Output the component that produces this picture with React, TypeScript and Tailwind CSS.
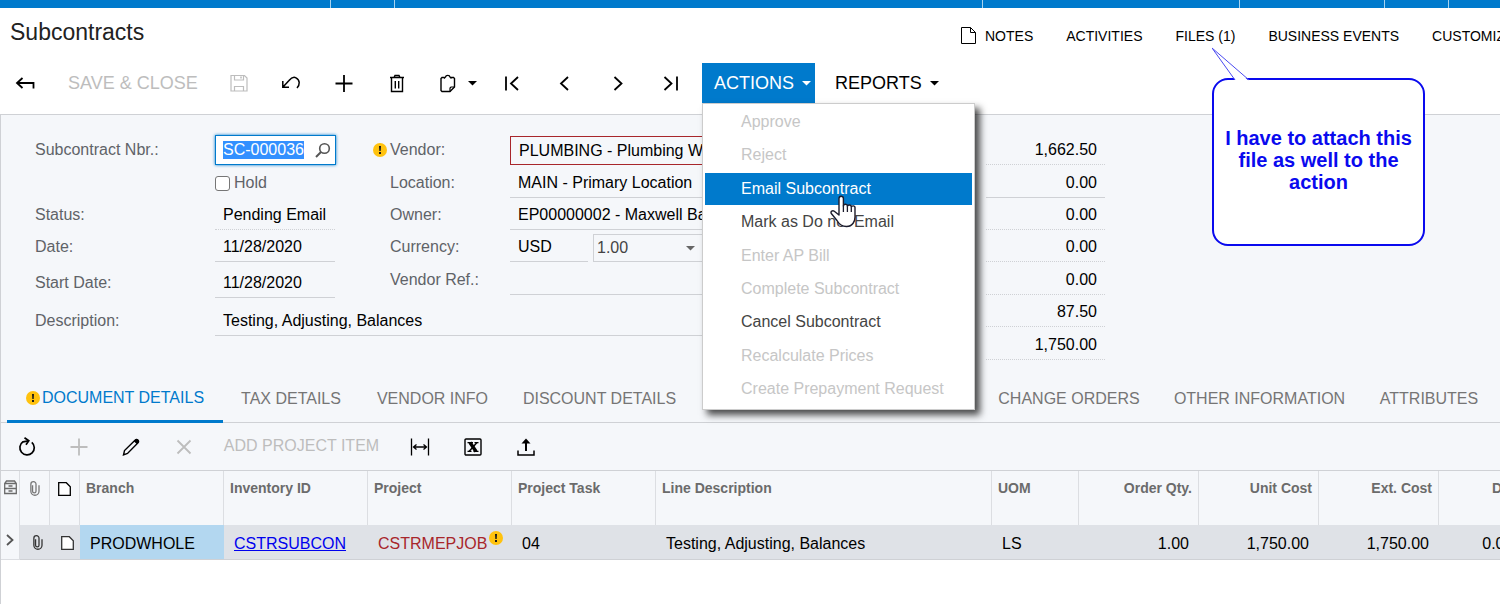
import React, { useEffect, useRef } from "react";

type IconProps = { children: React.ReactNode; size?: number; className?: string };

function Icon({ children, size = 20, className = "" }: IconProps) {
  return (
    <svg
      width={size}
      height={size}
      viewBox={`0 0 ${size} ${size}`}
      fill="none"
      stroke="currentColor"
      strokeWidth="1.6"
      className={`shrink-0 ${className}`}
      aria-hidden="true"
    >
      {children}
    </svg>
  );
}

function Caret({ className = "" }: { className?: string }) {
  return (
    <svg width="9" height="5" viewBox="0 0 9 5" className={`shrink-0 ${className}`} aria-hidden="true">
      <path d="M0 0h9L4.500 4.600z" fill="currentColor" />
    </svg>
  );
}

function Alert({ className = "" }: { className?: string }) {
  return (
    <svg width="14" height="14" viewBox="0 0 14 14" className={`shrink-0 ${className}`} role="img" aria-label="Warning">
      <circle cx="7" cy="7" r="7" fill="#ffc20e" />
      <path d="M6 3h2l-.3 5H6.300z" fill="#1a1a1a" />
      <rect x="6" y="9" width="2" height="2" fill="#1a1a1a" />
    </svg>
  );
}

function PageIcon({ className = "" }: { className?: string }) {
  return (
    <svg width="15" height="17" viewBox="0 0 15 17" fill="none" stroke="currentColor" className={`shrink-0 ${className}`} aria-hidden="true">
      <path d="M.5.5h9l5 5v11H.5z" />
      <path d="M9.500.5v5h5" />
    </svg>
  );
}

function DocIcon() {
  return (
    <svg width="13" height="14" viewBox="0 0 13 14" className="inline-block" aria-hidden="true">
      <path d="M.7.700h7.600l4 4v8.600H.7z" fill="#fff" stroke="currentColor" strokeWidth="1.300" />
    </svg>
  );
}

function ClipIcon({ className = "" }: { className?: string }) {
  return (
    <svg width="11" height="15" viewBox="0 0 10 14" fill="none" stroke="currentColor" strokeWidth="1.200" className={`inline-block ${className}`} aria-hidden="true">
      <path d="M3.200 4v5.500a1.600 1.600 0 0 0 3.200 0V3a2.400 2.400 0 0 0-4.800 0v6.500a3.800 3.800 0 0 0 7.600 0V4" />
    </svg>
  );
}

function ToolButton({
  label,
  disabled,
  children,
  className = "w-[53px]",
}: {
  label: string;
  disabled?: boolean;
  children: React.ReactNode;
  className?: string;
}) {
  return (
    <button
      type="button"
      aria-label={label}
      disabled={disabled}
      className={`flex h-10 shrink-0 items-center justify-center ${disabled ? "text-[#bdbdbd]" : "text-black"} ${className}`}
    >
      {children}
    </button>
  );
}

const menuItems = [
  { label: "Approve", state: "off" },
  { label: "Reject", state: "off" },
  { label: "Email Subcontract", state: "active" },
  { label: "Mark as Do not Email", state: "on" },
  { label: "Enter AP Bill", state: "off" },
  { label: "Complete Subcontract", state: "off" },
  { label: "Cancel Subcontract", state: "on" },
  { label: "Recalculate Prices", state: "off" },
  { label: "Create Prepayment Request", state: "off" },
];

const menuStyles: Record<string, string> = {
  off: "text-[#c6c6c6]",
  on: "text-[#444]",
  active: "bg-[#007acc] text-white",
};

function HandCursor() {
  return (
    <svg
      width="26"
      height="33"
      viewBox="0 0 26 33"
      className="pointer-events-none absolute left-[127px] top-[91px]"
      aria-hidden="true"
    >
      <path
        d="M9 17V3.500a2.200 2.200 0 0 1 4.400 0V11a2 2 0 0 1 4 .4 2 2 0 0 1 3.900.8 1.900 1.900 0 0 1 3.700.8v9c0 4-2.200 9.500-8.500 9.500-5.500 0-7.500-2.500-9.500-6L1.300 18.500c-1-2 1.200-3.600 3-2.300L9 20z"
        fill="#fff"
        stroke="#1b1b2b"
        strokeWidth="1.400"
        strokeLinejoin="round"
      />
      <path d="M13.400 10.500V17M17.400 11.500V17M21.300 12.500V17" stroke="#1b1b2b" strokeWidth="1.300" />
    </svg>
  );
}

function ActionsMenu() {
  return (
    <div className="relative shrink-0">
      <button
        type="button"
        aria-haspopup="menu"
        aria-expanded="true"
        className="flex h-10 w-[113px] items-center justify-between bg-[#007acc] pl-3 pr-1 text-lg text-white"
      >
        ACTIONS
        <Caret />
      </button>
      <div
        role="menu"
        className="absolute left-0 top-10 z-20 flex h-[307px] w-[273px] flex-col justify-between border border-[#ccc] bg-white px-0.5 pb-1 pt-0.5 shadow-[5px_5px_7px_rgba(0,0,0,0.7)]"
      >
        {menuItems.map((item) => (
          <button
            key={item.label}
            type="button"
            role="menuitem"
            disabled={item.state === "off"}
            className={`flex h-8 items-center pl-9 text-left ${menuStyles[item.state]}`}
          >
            {item.label}
          </button>
        ))}
        <HandCursor />
      </div>
    </div>
  );
}

function Callout() {
  return (
    <aside className="absolute right-[75px] top-[78px] z-30 flex h-[168px] w-[213px] items-center justify-center rounded-2xl border-2 border-[#0a0aee] bg-white text-center">
      <p className="pb-1 text-xl font-bold leading-[22px] text-[#0a0aee]">
        I have to attach this file as well to the action
      </p>
      <svg width="42" height="35" viewBox="0 0 42 35" className="absolute -left-0.5 -top-[33px]" aria-hidden="true">
        <path d="M0 1L24 34H37z" fill="#fff" />
        <path d="M23 33L0 1L37 33" fill="none" stroke="#4a4af0" strokeWidth="1" />
      </svg>
    </aside>
  );
}

const line = "border-b border-[#cfd1d5]";
const dotted = "border-b border-dotted border-[#cfd1d5]";
const labelText = "self-end pb-[3px] leading-6 text-[#5f6368]";

function Field({
  id,
  label,
  value,
  width,
  frame = line,
  readOnly,
}: {
  id: string;
  label: string;
  value: string;
  width: string;
  frame?: string;
  readOnly?: boolean;
}) {
  return (
    <>
      <label htmlFor={id} className={labelText}>
        {label}
      </label>
      <input
        id={id}
        defaultValue={value}
        readOnly={readOnly}
        className={`h-[29px] self-end bg-transparent px-2 text-black outline-none ${width} ${frame}`}
      />
    </>
  );
}

function NumberField() {
  const ref = useRef<HTMLInputElement>(null);
  useEffect(() => {
    ref.current?.focus();
    ref.current?.select();
  }, []);
  return (
    <>
      <label htmlFor="nbr" className={labelText}>
        Subcontract Nbr.:
      </label>
      <div className="flex h-[30px] w-[121px] items-center self-end border border-[#007acc] bg-white pr-1 shadow-[0_0_3px_#007acc]">
        <input
          id="nbr"
          ref={ref}
          defaultValue="SC-000036"
          className="min-w-0 flex-1 pl-[7px] leading-[18px] text-black outline-none selection:bg-[#3390ff] selection:text-white"
        />
        <button type="button" aria-label="Look up" className="text-[#555]">
          <Icon size={16}>
            <circle cx="9.500" cy="6.500" r="4.800" />
            <path d="M6 10L1 15" strokeWidth="2" />
          </Icon>
        </button>
      </div>
    </>
  );
}

const totals = [
  { label: "Detail Total:", value: "1,662.50", frame: dotted },
  { label: "Line Discount:", value: "0.00", frame: line },
  { label: "Doc. Disc..", value: "0.00", frame: dotted },
  { label: "VAT Exempt..", value: "0.00", frame: dotted },
  { label: "VAT Taxable:", value: "0.00", frame: dotted },
  { label: "Tax Total:", value: "87.50", frame: dotted },
  { label: "Subcontract...", value: "1,750.00", frame: dotted },
];

function Summary() {
  return (
    <section className="flex h-[261px] border-l border-t border-[#cfd1d5] pl-[34px] pt-[18px]">
      <div className="w-[670px] shrink-0">
        <div className="flex">
          <div className="grid w-[355px] shrink-0 grid-cols-[180px_1fr] grid-rows-[32px_33px_32px_32px_36px]">
            <NumberField />
            <label className="col-start-2 flex items-center gap-1 self-end pb-[3px] leading-6 text-[#5f6368]">
              <input type="checkbox" className="m-0 size-[15px] appearance-none rounded-[3px] border border-[#767676] bg-white" />
              Hold
            </label>
            <Field id="status" label="Status:" value="Pending Email" width="w-[120px]" frame={dotted} readOnly />
            <Field id="date" label="Date:" value="11/28/2020" width="w-[120px]" />
            <Field id="start" label="Start Date:" value="11/28/2020" width="w-[120px]" />
          </div>
          <div className="grid shrink-0 grid-cols-[120px_300px] grid-rows-[32px_33px_32px_32px_33px]">
            <label htmlFor="vendor" className="-ml-[17px] flex items-center gap-[3px] self-end pb-[3px] leading-6 text-[#5f6368]">
              <Alert />
              Vendor:
            </label>
            <input
              id="vendor"
              defaultValue="PLUMBING - Plumbing Works"
              className="h-[29px] self-end border border-[#a8262b] bg-transparent px-2 text-black outline-none"
            />
            <Field id="location" label="Location:" value="MAIN - Primary Location" width="w-full" />
            <Field id="owner" label="Owner:" value="EP00000002 - Maxwell Baker" width="w-full" />
            <label htmlFor="currency" className={labelText}>
              Currency:
            </label>
            <div className="flex items-end gap-[5px]">
              <input id="currency" defaultValue="USD" className={`h-[29px] w-[78px] bg-transparent px-2 text-black outline-none ${line}`} />
              <div className="relative">
                <select aria-label="Rate" className="block h-7 w-[112px] appearance-none border border-[#cfd1d5] bg-transparent pl-[3px] text-[#444]">
                  <option>1.00</option>
                </select>
                <Caret className="pointer-events-none absolute right-[10px] top-[12px] text-[#666]" />
              </div>
            </div>
            <Field id="ref" label="Vendor Ref.:" value="" width="w-full" />
          </div>
        </div>
        <div className="grid grid-cols-[180px_595px] grid-rows-[38px]">
          <Field id="description" label="Description:" value="Testing, Adjusting, Balances" width="w-full" />
        </div>
      </div>
      <div className="ml-[152px] grid grid-cols-[122px_119px] grid-rows-[32px_33px_32px_32px_33px_32px_33px] gap-x-[7px]">
        {totals.map((t) => (
          <React.Fragment key={t.label}>
            <label htmlFor={t.label} className="self-end pb-[3px] pr-1 text-right leading-6 text-[#5f6368]">
              {t.label}
            </label>
            <input
              id={t.label}
              defaultValue={t.value}
              readOnly
              className={`h-[29px] w-full self-end bg-transparent pr-2 text-right text-black outline-none ${t.frame}`}
            />
          </React.Fragment>
        ))}
      </div>
    </section>
  );
}

const tabs = [
  { label: "TAX DETAILS", width: "w-[136px]" },
  { label: "VENDOR INFO", width: "w-[147px]" },
  { label: "DISCOUNT DETAILS", width: "w-[187px]" },
  { label: "CHANGE ORDERS", width: "ml-[288px] w-[176px]" },
  { label: "OTHER INFORMATION", width: "w-[205px]" },
  { label: "ATTRIBUTES", width: "w-[134px]" },
];

function Tabs() {
  return (
    <div role="tablist" className="flex h-12 border-b border-l border-[#cfd1d5] pl-1.5 text-[#757575]">
      <button
        type="button"
        role="tab"
        aria-selected="true"
        className="-mb-px flex w-[216px] shrink-0 items-center justify-center gap-0.5 whitespace-nowrap border-b-3 border-[#007acc] text-[#007acc]"
      >
        <Alert />
        DOCUMENT DETAILS
      </button>
      {tabs.map((t) => (
        <button key={t.label} type="button" role="tab" className={`shrink-0 whitespace-nowrap ${t.width}`}>
          {t.label}
        </button>
      ))}
    </div>
  );
}

function GridToolbar() {
  return (
    <div className="flex h-12 items-center border-b border-l border-[#cfd1d5]">
      <ToolButton label="Refresh" className="w-[51px]">
        <Icon>
          <path d="M14.800 5.300A7.200 7.200 0 1 1 6 4.800L11.500 3.800" strokeWidth="1.700" />
          <path d="M7.500.8l4.300 3L9 7.800" strokeWidth="1.700" />
        </Icon>
      </ToolButton>
      <ToolButton label="Add row" disabled>
        <Icon>
          <path d="M10 1.500v17M1.500 10h17" strokeWidth="1.800" />
        </Icon>
      </ToolButton>
      <ToolButton label="Edit" className="w-[52px]">
        <Icon>
          <path d="M2.500 18l1-4.500L14 3.200c2-2 4.800.6 2.800 2.800L6.500 16.500z" strokeWidth="1.400" />
          <path d="M13 4.200l1.500-1.500c2-1 3.500.5 2.800 2.500l-1.500 1.600z" fill="currentColor" strokeWidth=".5" />
        </Icon>
      </ToolButton>
      <ToolButton label="Delete row" disabled>
        <Icon>
          <path d="M3.500 3.500l13 13M16.500 3.500l-13 13" strokeWidth="1.800" />
        </Icon>
      </ToolButton>
      <button type="button" disabled className="w-[183px] shrink-0 whitespace-nowrap pb-0.5 text-center text-[#bdbdbd]">
        ADD PROJECT ITEM
      </button>
      <ToolButton label="Fit columns">
        <Icon>
          <path d="M1.500 1.500v17M18.500 1.500v17" strokeWidth="1.300" />
          <path d="M3.500 10h13M6.500 7.500L3.500 10l3 2.500M13.500 7.500l3 2.500-3 2.500" strokeWidth="1.300" />
        </Icon>
      </ToolButton>
      <ToolButton label="Export to Excel">
        <Icon>
          <rect x="2" y="2" width="16" height="16" rx="1" strokeWidth="1.400" />
          <path d="M7 5.500L13 14.500" strokeWidth="3.400" />
          <path d="M14 5.500L6 14.500" strokeWidth="1.400" />
          <path d="M4.500 5.700h5.500M11.500 5.700h4M4.500 14.300h4M10.500 14.300h5" strokeWidth="1.300" />
        </Icon>
      </ToolButton>
      <ToolButton label="Upload">
        <Icon>
          <path d="M2 13.500v4.500h16v-4.500" strokeWidth="1.500" />
          <path d="M10 14V4" strokeWidth="2" />
          <path d="M5.500 6.500L10 1.500l4.500 5z" fill="currentColor" stroke="none" />
        </Icon>
      </ToolButton>
    </div>
  );
}

const th = "border-r border-[#dcdee2] px-1.5 pt-[9px] align-top text-left text-sm leading-4 font-bold text-[#6b6b6b] whitespace-nowrap";
const thIcon = "border-r border-[#dcdee2] px-0 pt-[9px] align-top text-center leading-none";
const td = "border-b border-[#cfd1d5] bg-[#dfe2e7] px-2.5 pb-0 pt-1 whitespace-nowrap";
const tdIcon = "border-b border-[#cfd1d5] bg-[#dfe2e7] py-0 pl-1 pr-0 text-center leading-none text-[#333]";

function Grid() {
  return (
    <div className="overflow-hidden border-l border-[#cfd1d5]">
      <table className="w-[1558px] table-fixed border-separate border-spacing-0">
        <colgroup>
          <col className="w-[19px]" />
          <col className="w-[30px]" />
          <col className="w-[30px]" />
          <col className="w-[144px]" />
          <col className="w-[144px]" />
          <col className="w-[144px]" />
          <col className="w-[144px]" />
          <col className="w-[336px]" />
          <col className="w-[87px]" />
          <col className="w-[120px]" />
          <col className="w-[120px]" />
          <col className="w-[120px]" />
          <col className="w-[120px]" />
        </colgroup>
        <thead>
          <tr className="h-[54px] bg-[#f5f7fa]">
            <th className={`${thIcon} text-[#6b6b6b]`} aria-label="Row settings">
              <svg width="13" height="15" viewBox="0 0 13 15" fill="none" stroke="currentColor" strokeWidth="1.300" className="mx-auto" aria-hidden="true">
                <path d="M2.500 1h8l1.800 2.500v10H.7v-10zM.7 3.500h11.600M.7 8.500h11.600M4.500 6h4M4.500 11h4" />
              </svg>
            </th>
            <th className={`${thIcon} text-[#777]`} aria-label="Files">
              <ClipIcon />
            </th>
            <th className={`${thIcon} text-black`} aria-label="Notes">
              <DocIcon />
            </th>
            <th className={th}>Branch</th>
            <th className={th}>Inventory ID</th>
            <th className={th}>Project</th>
            <th className={th}>Project Task</th>
            <th className={th}>Line Description</th>
            <th className={th}>UOM</th>
            <th className={`${th} !text-right`}>Order Qty.</th>
            <th className={`${th} !text-right`}>Unit Cost</th>
            <th className={`${th} !text-right`}>Ext. Cost</th>
            <th className={`${th} !text-right`}>Discount</th>
          </tr>
        </thead>
        <tbody>
          <tr className="h-[35px]">
            <td className="border-b border-r border-[#dcdee2] bg-[#f5f7fa] px-0 text-[#555]">
              <svg width="8" height="12" viewBox="0 0 8 12" fill="none" stroke="currentColor" strokeWidth="1.800" className="mx-auto -mt-1" aria-hidden="true">
                <path d="M1 1l5.500 5L1 11" />
              </svg>
            </td>
            <td className={tdIcon}>
              <ClipIcon />
            </td>
            <td className={tdIcon}>
              <DocIcon />
            </td>
            <td className="border-b border-[#cfd1d5] bg-[#b3d7f0] px-2.5 pb-0 pt-1">PRODWHOLE</td>
            <td className={td}>
              <a href="#inventory" className="text-[#0000ee] underline">
                CSTRSUBCON
              </a>
            </td>
            <td className={`${td} text-[#a8262b]`}>
              <span className="flex items-center gap-0.5">
                CSTRMEPJOB
                <Alert className="-mt-3" />
              </span>
            </td>
            <td className={td}>04</td>
            <td className={td}>Testing, Adjusting, Balances</td>
            <td className={td}>LS</td>
            <td className={`${td} text-right`}>1.00</td>
            <td className={`${td} text-right`}>1,750.00</td>
            <td className={`${td} text-right`}>1,750.00</td>
            <td className={`${td} text-right`}>0.000000</td>
          </tr>
        </tbody>
      </table>
      <div className="h-11 bg-white" />
    </div>
  );
}

export default function App() {
  return (
    <div className="relative min-h-screen overflow-hidden bg-white font-['Liberation_Sans',Arial,sans-serif] text-base leading-5 text-black">
      <div className="flex h-2 bg-[#007acc]">
        <div className="w-[331px] border-r border-[#a9d3ef]" />
        <div className="w-16 border-r border-[#a9d3ef]" />
        <div className="flex-1 border-r border-[#a9d3ef]" />
        <div className="w-[257px] border-r border-[#a9d3ef]" />
        <div className="w-[145px] border-r border-[#a9d3ef]" />
        <div className="w-16 border-r border-[#a9d3ef]" />
        <div className="w-[51px]" />
      </div>

      <header className="flex h-[55px] items-center pl-2.5">
        <h1 className="pb-2 text-[23px] leading-7 text-[#222]">Subcontracts</h1>
        <nav className="ml-auto flex w-[539px] shrink-0 items-center gap-[33px] overflow-hidden whitespace-nowrap text-sm">
          <a href="#notes" className="flex items-center gap-[9px]">
            <PageIcon />
            NOTES
          </a>
          <a href="#activities">ACTIVITIES</a>
          <a href="#files">FILES (1)</a>
          <a href="#events">BUSINESS EVENTS</a>
          <a href="#customization">CUSTOMIZATION</a>
        </nav>
      </header>

      <div className="flex h-[51px] items-start">
        <ToolButton label="Back" className="w-[49px]">
          <Icon>
            <path d="M18.500 15.500V10H2M7.500 5L2 10l5.500 5" strokeWidth="1.800" />
          </Icon>
        </ToolButton>
        <button type="button" disabled className="h-10 w-[163px] shrink-0 whitespace-nowrap pl-[19px] text-left text-lg text-[#bdbdbd]">
          SAVE &amp; CLOSE
        </button>
        <ToolButton label="Save" disabled>
          <Icon>
            <path d="M2 2.500h13.500L18 5v13H2zM5.500 2.500v4.500h9V2.500M5.500 18v-4.500h9V18" strokeWidth="1.200" />
            <path d="M12 3.500v2" />
          </Icon>
        </ToolButton>
        <ToolButton label="Undo" className="w-[52px]">
          <Icon>
            <path d="M1.800 8v6.200h6.200M1.800 14.200L8 7.500C10 5 12.500 3.500 15 4.800c4.200 2.200 4 7 1 10.200" strokeWidth="1.500" />
          </Icon>
        </ToolButton>
        <ToolButton label="Add">
          <Icon>
            <path d="M10 2v17M1.500 10.500h17" strokeWidth="1.800" />
          </Icon>
        </ToolButton>
        <ToolButton label="Delete">
          <Icon>
            <path d="M3 4.500h14M4.500 5v13.500h11V5M7 4.500l1-2h4l1 2M8.300 8v7.500M11.700 8v7.500" strokeWidth="1.400" />
          </Icon>
        </ToolButton>
        <ToolButton label="Clipboard" className="w-[62px] gap-2.5 pl-1.5">
          <Icon>
            <path d="M6.500 4.500H4L3 5.500v12l1 1h8l4.500-4.500V5.500l-1-1H13M6 5.500l1.500-1.500C8 1.800 11.500 1.800 12 4l1.500 1.500" strokeWidth="1.400" />
            <path d="M12 18.500V15l1-1h3.500" strokeWidth="1.200" />
          </Icon>
          <Caret />
        </ToolButton>
        <ToolButton label="First">
          <Icon>
            <path d="M4 3.500v14M16 4l-7 6.500 7 6.500" strokeWidth="1.800" />
          </Icon>
        </ToolButton>
        <ToolButton label="Previous">
          <Icon>
            <path d="M13 4l-7 6.500 7 6.500" strokeWidth="1.800" />
          </Icon>
        </ToolButton>
        <ToolButton label="Next">
          <Icon>
            <path d="M6.500 4l7 6.500-7 6.500" strokeWidth="1.800" />
          </Icon>
        </ToolButton>
        <ToolButton label="Last" className="mr-[5px] w-[53px]">
          <Icon>
            <path d="M16 3.500v14M3.500 4l7 6.500-7 6.500" strokeWidth="1.800" />
          </Icon>
        </ToolButton>
        <ActionsMenu />
        <button type="button" aria-haspopup="menu" className="flex h-10 shrink-0 items-center gap-2 pl-5 text-lg">
          REPORTS
          <Caret />
        </button>
      </div>

      <main className="bg-[#f5f7fa]">
        <Summary />
        <Tabs />
        <GridToolbar />
        <Grid />
      </main>
      <Callout />
    </div>
  );
}
